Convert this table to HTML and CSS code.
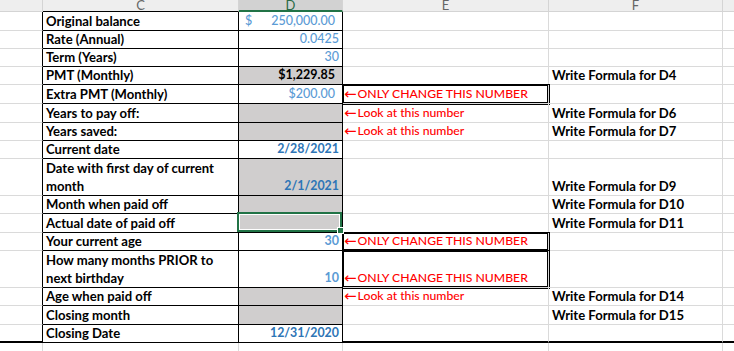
FILE: index.html
```html
<!DOCTYPE html>
<html lang="en">
<head>
<meta charset="utf-8">
<title>Mortgage sheet</title>
<link rel="stylesheet" href="styles.css">
</head>
<body>
<div class="sheet">
  <!-- header -->
  <div class="c h"></div>
  <div class="c h hk"><span>C</span></div>
  <div class="c h sel"><span>D</span></div>
  <div class="c h"><span>E</span></div>
  <div class="c h"><span>F</span></div>
  <div class="c h"></div>

  <!-- 1 -->
  <div class="c b"></div>
  <div class="c k lbl">Original balance</div>
  <div class="c k acc in"><span>$</span><span>250,000.00</span></div>
  <div class="c"></div>
  <div class="c"></div>
  <div class="c"></div>

  <!-- 2 -->
  <div class="c b"></div>
  <div class="c k lbl">Rate (Annual)</div>
  <div class="c k num in">0.0425</div>
  <div class="c"></div>
  <div class="c"></div>
  <div class="c"></div>

  <!-- 3 -->
  <div class="c b"></div>
  <div class="c k lbl">Term (Years)</div>
  <div class="c k num in">30</div>
  <div class="c"></div>
  <div class="c"></div>
  <div class="c"></div>

  <!-- 4 -->
  <div class="c b"></div>
  <div class="c k lbl">PMT (Monthly)</div>
  <div class="c k num cur g strong">$1,229.85</div>
  <div class="c"></div>
  <div class="c fx">Write Formula for D4</div>
  <div class="c"></div>

  <!-- 5 -->
  <div class="c b"></div>
  <div class="c k lbl">Extra PMT (Monthly)</div>
  <div class="c k num cur in">$200.00</div>
  <div class="c note box"><span class="arr">&larr;</span>ONLY CHANGE THIS NUMBER</div>
  <div class="c"></div>
  <div class="c"></div>

  <!-- 6 -->
  <div class="c b"></div>
  <div class="c k lbl">Years to pay off:</div>
  <div class="c k g"></div>
  <div class="c note"><span class="arr">&larr;</span>Look at this number</div>
  <div class="c fx">Write Formula for D6</div>
  <div class="c"></div>

  <!-- 7 -->
  <div class="c b"></div>
  <div class="c k lbl">Years saved:</div>
  <div class="c k g"></div>
  <div class="c note"><span class="arr">&larr;</span>Look at this number</div>
  <div class="c fx">Write Formula for D7</div>
  <div class="c"></div>

  <!-- 8 -->
  <div class="c b"></div>
  <div class="c k lbl">Current date</div>
  <div class="c k num dt">2/28/2021</div>
  <div class="c"></div>
  <div class="c"></div>
  <div class="c"></div>

  <!-- 9 -->
  <div class="c b"></div>
  <div class="c k lbl wrap">Date with first day of current<br>month</div>
  <div class="c k num dt g">2/1/2021</div>
  <div class="c"></div>
  <div class="c fx">Write Formula for D9</div>
  <div class="c"></div>

  <!-- 10 -->
  <div class="c b"></div>
  <div class="c k lbl">Month when paid off</div>
  <div class="c k g"></div>
  <div class="c"></div>
  <div class="c fx">Write Formula for D10</div>
  <div class="c"></div>

  <!-- 11 -->
  <div class="c b"></div>
  <div class="c k lbl">Actual date of paid off</div>
  <div class="c k g active"></div>
  <div class="c"></div>
  <div class="c fx">Write Formula for D11</div>
  <div class="c"></div>

  <!-- 12 -->
  <div class="c b"></div>
  <div class="c k lbl">Your current age</div>
  <div class="c k num in strong-in">30</div>
  <div class="c note box"><span class="arr">&larr;</span>ONLY CHANGE THIS NUMBER</div>
  <div class="c"></div>
  <div class="c"></div>

  <!-- 13 -->
  <div class="c b"></div>
  <div class="c k lbl wrap">How many months PRIOR to<br>next birthday</div>
  <div class="c k num in strong-in">10</div>
  <div class="c note box"><span class="arr">&larr;</span>ONLY CHANGE THIS NUMBER</div>
  <div class="c"></div>
  <div class="c"></div>

  <!-- 14 -->
  <div class="c b"></div>
  <div class="c k lbl">Age when paid off</div>
  <div class="c k g"></div>
  <div class="c note"><span class="arr">&larr;</span>Look at this number</div>
  <div class="c fx">Write Formula for D14</div>
  <div class="c"></div>

  <!-- 15 -->
  <div class="c b"></div>
  <div class="c k lbl">Closing month</div>
  <div class="c k g"></div>
  <div class="c"></div>
  <div class="c fx">Write Formula for D15</div>
  <div class="c"></div>

  <!-- 16 -->
  <div class="c b end"></div>
  <div class="c k lbl">Closing Date</div>
  <div class="c k num dt">12/31/2020</div>
  <div class="c end"></div>
  <div class="c end"></div>
  <div class="c end"></div>

  <!-- 17 -->
  <div class="c open"></div>
  <div class="c open"></div>
  <div class="c open"></div>
  <div class="c open"></div>
  <div class="c open"></div>
  <div class="c open"></div>
</div>
</body>
</html>
```

FILE: styles.css
```css
html, body {
  margin: 0;
  padding: 0;
  background: #ffffff;
  overflow: hidden;
}

body {
  font-family: Lato, "Liberation Sans", sans-serif;
  font-size: 12.5px;
  color: #000;
}

.sheet {
  display: grid;
  grid-template-columns: 43px 196px 104px 206px 174px 60px;
  grid-template-rows: 12px 19px 18px 18px 18px 19px 19px 18px 18px 37px 18px 19px 18px 37px 18px 19px 18px 20px;
  width: 783px;
}

.c {
  box-sizing: border-box;
  border-right: 1px solid #dadada;
  border-bottom: 1px solid #dadada;
  display: flex;
  align-items: flex-end;
  padding: 0 3px;
  line-height: 18px;
  white-space: nowrap;
  min-width: 0;
}

/* column headers */
.h {
  background: #eeeeee;
  border-right-color: #d4d4d4;
  border-bottom-color: #d4d4d4;
  justify-content: center;
  align-items: flex-start;
  color: #666666;
  overflow: hidden;
}
.h span {
  display: block;
  font-size: 13px;
  line-height: 12px;
  margin-top: -1px;
}
.hk {
  border-bottom-color: #000;
}
.sel {
  background: #d2d2d2;
  border-bottom: 2px solid #217346;
  color: #2b6a45;
}

/* borders of the bordered block */
.b {
  border-right-color: #000;
}
.k {
  border-right-color: #000;
  border-bottom-color: #000;
}
.end {
  border-bottom: 2px solid #000;
}
.open {
  border-bottom: none;
}

/* content */
.lbl {
  font-weight: 700;
  font-size: 13.1px;
}
.wrap {
  white-space: normal;
}
.num {
  justify-content: flex-end;
}
.cur {
  padding-right: 7px;
}
.acc {
  justify-content: space-between;
  padding: 0 7px 0 6px;
}
.in {
  color: #5b9bd5;
  font-weight: 500;
}
.strong-in {
  font-weight: 700;
}
.strong {
  font-weight: 700;
}
.dt {
  color: #2e75b6;
  font-weight: 700;
  font-size: 12.4px;
}
.g {
  background: #d0cece;
}
.note {
  color: #ff0000;
  padding-left: 1px;
  font-size: 12.2px;
  font-weight: 500;
}
.arr {
  font-family: "DejaVu Sans", sans-serif;
  font-weight: 400;
  font-size: 15px;
  margin-right: 1px;
}
.fx {
  font-weight: 700;
  font-size: 13.1px;
  padding-left: 3px;
}
.box {
  box-shadow: 0 0 0 1px #000, inset 0 0 0 1px #000;
}

/* active cell selection */
.active {
  position: relative;
}
.active::after {
  content: "";
  position: absolute;
  top: -2px;
  left: -2px;
  right: 0;
  bottom: 0;
  border: 2px solid #217346;
  box-shadow: inset 0 0 0 1px #ffffff;
}
.active::before {
  content: "";
  position: absolute;
  right: -2px;
  bottom: -2px;
  width: 5px;
  height: 5px;
  background: #217346;
  border: 1px solid #ffffff;
  z-index: 1;
}
```
